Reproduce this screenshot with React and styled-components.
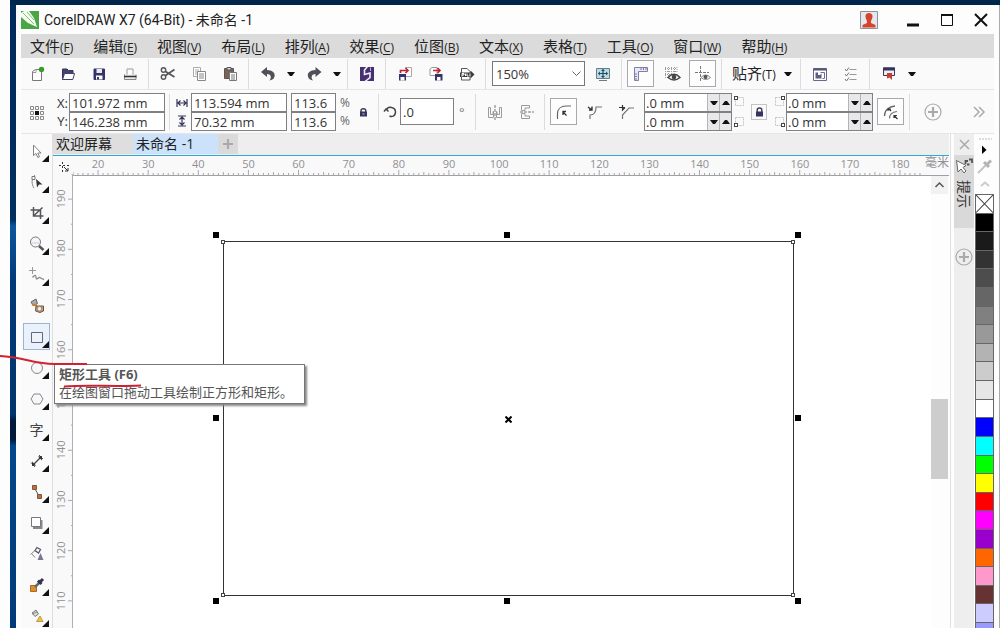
import React from 'react';
import styled, { createGlobalStyle, css } from 'styled-components';

const GlobalStyle = createGlobalStyle`
  *, *::before, *::after { box-sizing: border-box; }
  body { margin: 0; background: #fff; }
  body, button, input, select {
    font-family: "Open Sans", "Noto Sans CJK SC", sans-serif;
    font-size: 13px;
    color: #333;
  }
  button { padding: 0; border: 0; background: none; }
`;

const Desktop = styled.div`
  position: relative;
  height: 100vh;
  padding-left: 10px;
  overflow: hidden;
  background: #fdfdfd;
`;

const Wallpaper = styled.div`
  height: 100%;
  padding: 5px 1px 0 6px;
  background:
    linear-gradient(#00254a, #00254a) 0 0 / 100% 5px no-repeat,
    linear-gradient(#012a5c 0%, #01305f 35%, #0a57a0 36%, #023a78 45%, #01366e 66%, #001a3a 67%, #001a3a 70%, #02488c 71%, #023a78 100%) 0 0 / 6px 100% no-repeat,
    #aaa;
`;

const Window = styled.div`
  display: flex;
  flex-direction: column;
  height: 100%;
  padding: 0 5px;
  background: #fdfdfe;
`;

const TitleBar = styled.header`
  display: flex;
  align-items: center;
  flex: none;
  height: 29px;
  margin-right: -4px;
`;

const Title = styled.h1`
  flex: 1;
  margin: 0 0 0 5px;
  font-family: Roboto, "Noto Sans CJK SC", sans-serif;
  font-size: 14px;
  line-height: 20px;
  font-weight: 400;
  color: #222;
  white-space: nowrap;
`;

const WindowButton = styled.button`
  display: flex;
  justify-content: center;
  width: 34px;
`;

const UserButton = styled(WindowButton)`
  margin-right: 10px;
`;

const MenuBar = styled.nav`
  display: flex;
  gap: 20px;
  flex: none;
  height: 24px;
  padding-left: 9px;
  background: #dbdbdb;
`;

const MenuItem = styled.button`
  flex: none;
  font-size: 15px;
  line-height: 24px;
  color: #222;
  white-space: nowrap;
`;

const Mnemonic = styled.span`
  font-size: 12px;
  u { text-underline-offset: 2px; }
`;

const Bar = styled.div`
  display: flex;
  align-items: center;
  flex: none;
  height: ${(p) => p.$height}px;
  border-bottom: 1px solid #e6e6e8;
  background: #fafafb;
`;

const ToolButton = styled.button`
  display: flex;
  align-items: center;
  justify-content: center;
  flex: none;
  width: 31px;
  height: 27px;
  ${(p) => p.$boxed && css`
    width: 27px;
    margin: 0 2px;
    border: 1px solid #a9a9ad;
    background: #fdfdfe;
  `}
`;

const RatioButton = styled(ToolButton)`
  width: 23px;
`;

const CustomizeButton = styled(ToolButton)`
  margin-left: 4px;
`;

const CaretButton = styled.button`
  display: flex;
  align-items: center;
  justify-content: center;
  flex: none;
  width: 15px;
  height: 26px;
`;

const Separator = styled.span`
  flex: none;
  width: 1px;
  height: ${(p) => p.$height || 30}px;
  margin: 0 3px;
  background: #dcdce0;
`;

const SnapButton = styled.button`
  display: flex;
  align-items: center;
  gap: 8px;
  width: 72px;
  padding-left: 7px;
  font-size: 15px;
  line-height: 24px;
  color: #222;
  white-space: nowrap;
`;

const ZoomBox = styled.label`
  position: relative;
  display: flex;
  align-items: center;
  flex: none;
  width: 93px;
  margin: 0 2px 0 3px;
  svg { position: absolute; right: 3px; pointer-events: none; }
`;

const ZoomSelect = styled.select`
  appearance: none;
  width: 100%;
  height: 25px;
  padding: 0 3px;
  border: 1px solid #777;
  border-radius: 0;
  background: #fff;
  line-height: 20px;
`;

const FieldGroup = styled.div`
  display: grid;
  grid-template-columns: ${(p) => p.$columns};
  grid-template-rows: 19px 18px;
  flex: none;
  align-items: center;
  margin: 0 ${(p) => p.$right || 0}px 0 ${(p) => p.$left || 0}px;
`;

const FieldLabel = styled.label`
  display: flex;
  justify-content: center;
  line-height: 18px;
  white-space: nowrap;
`;

const Field = styled.input`
  width: 100%;
  height: ${(p) => p.$height || 19}px;
  align-self: start;
  padding: 0 2px;
  border: 1px solid #808084;
  border-radius: 0;
  background: #fff;
  line-height: 16px;
  color: #333;
`;

const SpinField = styled.div`
  display: flex;
  align-self: start;
  height: 19px;
  border: 1px solid #808084;
  background: #fff;
`;

const SpinInput = styled.input`
  flex: 1;
  min-width: 0;
  padding: 0 0 0 1px;
  border: 0;
  background: none;
  color: #333;
`;

const SpinButton = styled.button`
  display: flex;
  align-items: center;
  justify-content: center;
  width: 12px;
  border-left: 1px solid #b4b4b8;
  background: #e8e8ea;
`;

const AngleField = styled(Field)`
  width: 54px;
  flex: none;
  align-self: center;
`;

const Degree = styled.span`
  width: 18px;
  padding-left: 5px;
  line-height: 18px;
  color: #777;
`;

const Percent = styled.span`
  padding-left: 4px;
  line-height: 18px;
  font-size: 12px;
  color: #666;
`;

const CornerPair = styled.div`
  display: flex;
  flex-direction: column;
  align-items: center;
  gap: 7px;
  flex: none;
  width: 14px;
`;

const LockButton = styled.button`
  display: flex;
  align-items: center;
  justify-content: center;
  flex: none;
  width: 16px;
  height: 16px;
  margin: 0 5px;
  border: 1px solid #c4c4c8;
`;

const Spacer = styled.span`
  flex: 1;
`;

const Body = styled.div`
  display: flex;
  flex: 1;
  min-height: 0;
`;

const Toolbox = styled.aside`
  flex: none;
  width: 32px;
  padding-top: 1px;
  border-right: 1px solid #dedee2;
  background: #fafafb;
`;

const ToolSlot = styled.div`
  position: relative;
  display: flex;
  align-items: center;
  justify-content: center;
  height: 31px;
`;

const Tool = styled.button`
  display: flex;
  align-items: center;
  justify-content: center;
  width: 27px;
  height: 27px;
  border: 1px solid ${(p) => (p.$active ? '#9fb4d0' : 'transparent')};
  background: ${(p) => (p.$active ? '#e9f1fc' : 'none')};
`;

const Glyph = styled.span`
  font-size: 14px;
  line-height: 24px;
  color: #444;
`;

const Flyout = styled.span`
  position: absolute;
  right: 3px;
  bottom: 4px;
  width: 7px;
  height: 7px;
  background: #111;
  clip-path: polygon(100% 0, 100% 100%, 0 100%);
`;

const Tooltip = styled.div`
  position: absolute;
  z-index: 3;
  top: 43px;
  left: 33px;
  width: 251px;
  height: 40px;
  padding: 0 4px;
  border: 1px solid #777;
  background: #fff;
  box-shadow: 2px 2px 2px #888;
  font-size: 13px;
  line-height: 18px;
  color: #555;
  white-space: nowrap;
  strong { display: block; font-weight: 700; color: #555; }
`;

const Document = styled.main`
  display: flex;
  flex-direction: column;
  flex: 1;
  min-width: 0;
`;

const Tabs = styled.div`
  display: flex;
  flex: none;
  height: 22px;
  border-bottom: 1px solid #2fa8d8;
  background: #eeeeee;
`;

const Tab = styled.button`
  width: ${(p) => p.$width}px;
  height: 20px;
  padding: 0 0 0 3px;
  text-align: left;
  font-size: 14px;
  line-height: 20px;
  color: #222;
  white-space: nowrap;
  background: ${(p) => (p.$active ? '#cce2fb' : '#dedede')};
`;

const AddTab = styled.button`
  display: flex;
  align-items: center;
  justify-content: center;
  width: 20px;
  height: 20px;
  background: #dadada;
`;

const Workspace = styled.div`
  display: flex;
  flex: 1;
  min-height: 0;
`;

const RulerColumn = styled.div`
  display: flex;
  flex-direction: column;
  flex: none;
  width: 20px;
  background: #f9f9fa;
`;

const RulerOrigin = styled.button`
  display: flex;
  align-items: center;
  justify-content: center;
  flex: none;
  height: 18px;
  padding: 4px 0 0 2px;
`;

const VerticalRuler = styled.div`
  display: flex;
  flex: 1;
  min-height: 0;
  padding-bottom: 2px;
  border-right: 1px solid #b0b0b4;
`;

const VerticalLabels = styled.div`
  display: flex;
  flex-direction: column;
  flex: 1;
`;

const VerticalLabel = styled.span`
  display: flex;
  flex: 1;
  align-items: center;
  justify-content: center;
  writing-mode: vertical-rl;
  transform: rotate(180deg);
  width: 14px;
  margin-left: 1px;
  font-size: 11px;
  line-height: 14px;
  color: #909094;
`;

const PageColumn = styled.div`
  display: flex;
  flex-direction: column;
  flex: 1;
  min-width: 0;
`;

const HorizontalRuler = styled.div`
  display: flex;
  flex: none;
  height: 20px;
  border-bottom: 1px solid #a0a0a4;
  background: #f9f9fa;
`;

const HorizontalScale = styled.div`
  display: flex;
  flex-direction: column;
  flex: 1;
`;

const HorizontalLabels = styled.div`
  display: flex;
  height: 14px;
`;

const HorizontalLabel = styled.span`
  flex: 1;
  text-align: center;
  font-size: 11px;
  line-height: 15px;
  color: #909094;
`;

const Unit = styled.span`
  width: 24px;
  font-size: 12px;
  line-height: 14px;
  color: #909094;
  white-space: nowrap;
`;

const CanvasRow = styled.div`
  display: flex;
  flex: 1;
  min-height: 0;
`;

const Canvas = styled.section`
  position: relative;
  flex: 1;
  overflow: hidden;
  background: #fff;
`;

const Shape = styled.div`
  position: absolute;
  left: 150px;
  top: 65px;
  width: 571px;
  height: 355px;
  border: 1px solid #333;
`;

const Handle = styled.span`
  position: absolute;
  left: ${(p) => p.$x}px;
  top: ${(p) => p.$y}px;
  width: 6px;
  height: 6px;
  background: #000;
`;

const Node = styled.span`
  position: absolute;
  left: ${(p) => p.$x}px;
  top: ${(p) => p.$y}px;
  width: 4px;
  height: 4px;
  border: 1px solid #444;
  background: #fff;
`;

const CenterMark = styled.svg`
  position: absolute;
  left: 432px;
  top: 240px;
`;

const ScrollTrack = styled.div`
  display: flex;
  flex-direction: column;
  flex: none;
  width: 18px;
  background: #fdfdfd;
`;

const ScrollArrow = styled.button`
  display: flex;
  align-items: center;
  justify-content: center;
  width: 17px;
  height: 18px;
  background: #f2f2f2;
`;

const ScrollThumb = styled.div`
  width: 17px;
  height: 80px;
  margin-top: 205px;
  background: #cdcdcd;
`;

const Docker = styled.aside`
  display: flex;
  flex-direction: column;
  align-items: center;
  flex: none;
  width: 20px;
  margin: 0 1px 0 5px;
  background: #eeeeee;
  box-shadow: -3px 0 0 #fdfdfe, -4px 0 0 #e0e0e4;
`;

const DockerClose = styled.button`
  display: flex;
  align-items: center;
  justify-content: center;
  width: 20px;
  height: 21px;
`;

const DockerTab = styled.button`
  display: flex;
  flex-direction: column;
  align-items: center;
  gap: 5px;
  width: 20px;
  height: 73px;
  padding-top: 2px;
  background: #d9d9d9;
  span {
    writing-mode: vertical-rl;
    text-orientation: sideways;
    line-height: 20px;
    font-size: 14px;
    color: #333;
  }
`;

const DockerAdd = styled.button`
  margin-top: 20px;
  height: 18px;
`;

const Palette = styled.aside`
  display: flex;
  flex-direction: column;
  flex: none;
  width: 19px;
`;

const PaletteTools = styled.div`
  display: flex;
  flex-direction: column;
  align-items: center;
  flex: none;
  height: 60px;
`;

const Swatch = styled.button`
  flex: 1;
  min-height: 0;
  border: 1px solid #666;
  border-bottom: 0;
  background: ${(p) => p.$color};
  ${(p) => p.$partial && css`flex: none; height: 6px;`}
  svg { display: block; width: 100%; height: 100%; }
`;

const Annotation = styled.svg`
  position: absolute;
  z-index: 5;
  top: 350px;
  left: 0;
  pointer-events: none;
`;

const Icon = ({ size = 18, children }) => (
  <svg width={size} height={size} viewBox={`0 0 ${size} ${size}`} fill="none" stroke="#55555c" strokeWidth="1" aria-hidden="true">
    {children}
  </svg>
);

const Caret = ({ up = false }) => (
  <svg width="8" height="4" viewBox="0 0 8 4" aria-hidden="true">
    <path d={up ? 'M0 4L3 0H5L8 4Z' : 'M0 0H8L5 4H3Z'} fill="#111" />
  </svg>
);

const Plus = ({ circled = false }) => (
  <svg width="20" height="18" viewBox="0 0 20 18" fill="none" stroke="#aaa" aria-hidden="true">
    {circled && <circle cx="10" cy="9" r="8" strokeWidth="1.2" />}
    <path d="M10 4V14M5 9H15" strokeWidth="2.2" />
  </svg>
);

const Padlock = ({ open = false }) => (
  <svg width="9" height="10" viewBox="0 0 9 10" aria-hidden="true">
    <path d={open ? 'M2 5V3.6C2 1.2 6.8 1.2 6.8 3.6V5' : 'M2.2 5V3C2.2.4 6.8.4 6.8 3V5'} fill="none" stroke="#3c3c50" strokeWidth="1.4" />
    <rect x="1" y="4.5" width="7" height="5" fill="#34345e" />
    {open && <path d="M3.5 7H5.5" stroke="#c8c8e0" />}
  </svg>
);

const icons = {
  create: <><path d="M4.5 15.5V6.5L7.5 4.5H13.5V15.5Z" fill="#fff" stroke="#777" /><path d="M4.5 7.5H8V4.5" stroke="#999" /><circle cx="13.5" cy="4.5" r="2.7" fill="#389b2c" stroke="none" /></>,
  open: <><path d="M3.5 14.5V4H8L9.5 5.5H14V8" fill="#44446e" stroke="#33335a" /><path d="M3.5 14.5L5.5 8.5H15.5L13.8 14.5Z" fill="#fff" stroke="#404066" /></>,
  save: <><path d="M4 4H14.5V14.5H4Z" fill="#34346a" stroke="#34346a" /><path d="M6.5 4H12V8H6.5Z" fill="#e8e8f4" stroke="none" /><path d="M6 10.5H12.5V14.5H6Z" fill="#fff" stroke="none" /><path d="M7 12H9V14.5H7Z" fill="#34346a" stroke="none" /></>,
  print: <><path d="M6 10V4H12V10" fill="#fff" stroke="#999" /><path d="M3.5 9.5V14.5H15V9.5" fill="#e9e9e4" stroke="#888" /><path d="M3 11.5H15.5" stroke="#333" strokeWidth="1.5" /></>,
  cut: <><circle cx="4.5" cy="5" r="2.2" strokeWidth="1.4" /><circle cx="4.5" cy="12" r="2.2" strokeWidth="1.4" /><path d="M6.5 6.5L15.5 12M6.5 10.5L15.5 4.5" strokeWidth="1.8" /></>,
  copy: <><path d="M3.5 2.5H10.5V11.5H3.5Z" fill="#fff" stroke="#aaa" /><path d="M5 5H9M5 7H9M5 9H8" stroke="#aaa" /><path d="M7.5 6.5H15.5V15.5H7.5Z" fill="#fff" stroke="#888" /><path d="M9 9H14M9 11H14M9 13H14" stroke="#888" /></>,
  paste: <><path d="M3.5 3.5H12.5V13.5H3.5Z" fill="#77655c" stroke="#64544c" /><path d="M6 2.5H10V5H6Z" fill="#ddd" /><path d="M8.5 7.5H15.5V15.5H8.5Z" fill="#fff" stroke="#777" /><path d="M10 10H14M10 12H14M10 14H14" stroke="#777" /></>,
  undo: <path d="M2 7L8 2V5C13.5 5 16.5 8 15.5 11.5C15 14 13 15.2 10.5 15.5C13 12.5 12 9 8 9V12Z" fill="#505058" stroke="none" />,
  redo: <path d="M16.5 7L10.5 2V5C5 5 2 8 3 11.5C3.5 14 5.5 15.2 8 15.5C5.5 12.5 6.5 9 10.5 9V12Z" fill="#505058" stroke="none" />,
  search: <><path d="M2 2H16V16H2Z" fill="#472f70" stroke="none" /><path d="M9.5 1.5L6.5 5V9.5L12 8V12.5L7 16.5" stroke="#f2edf8" strokeWidth="1.6" /><path d="M12.5 2.5V6" stroke="#bfb2d4" /></>,
  importFile: <><path d="M9 2.5H15.5V11.5H9" stroke="#aaa" fill="#fff" /><path d="M3 9H10V15.5H3Z" fill="#34346a" stroke="none" /><path d="M4.5 12H8.5V15.5H4.5Z" fill="#fff" stroke="none" /><path d="M4.5 8V5.5H12M9.5 3L12 5.5L9.5 8" stroke="#bd2730" strokeWidth="1.7" /></>,
  exportFile: <><path d="M3 10.5V4L5 2.5H10V10.5Z" fill="#fff" stroke="#999" /><path d="M8 9H15.5V15.5H8Z" fill="#34346a" stroke="none" /><path d="M10 12H13.5V15.5H10Z" fill="#fff" stroke="none" /><path d="M6 5.5H13M10.5 3L13 5.5L10.5 8" stroke="#bd2730" strokeWidth="1.7" /></>,
  publish: <><path d="M3.5 15V3.5H9L12 6.5V15Z" fill="#fff" stroke="#555" /><path d="M2 7.5H12.5V5.5L16.5 9.5L12.5 13.5V12H2Z" fill="#3c3c40" stroke="none" /><path d="M4 11.5V8.5H6V10H4M7.5 8.5V11M9 8.5V11H10.5M12 8.5V11.5" stroke="#fff" /></>,
  fullScreen: <><path d="M2.5 3.5H15.5V13.5H2.5Z" fill="#b9dbe5" stroke="#6a7c88" /><path d="M9 4.5V12.5M4.5 8.5H13.5" stroke="#234c63" strokeWidth="1.2" /><path d="M9 4L7 6H11ZM9 13L7 11H11ZM4 8.5L6 6.5V10.5ZM14 8.5L12 6.5V10.5Z" fill="#234c63" stroke="none" /><path d="M5 15.5H13" stroke="#777" /></>,
  rulers: <><path d="M2.5 2.5H15.5V6.5H6.5V15.5H2.5Z" fill="#e8e8fa" stroke="#8080a4" /><path d="M9 3V5M11.5 3V5M14 3V5M3 9H5M3 11.5H5M3 14H5" stroke="#7878a0" /></>,
  grid: <><path d="M2 3.5H14M2 6.5H14M2 9.5H9M2 12.5H6M2.5 2V14M5.5 2V14M8.5 2V9M11.5 2V8M14 2V7" stroke="#9a9a9e" strokeDasharray="1 1" /><path d="M5 12.5Q11 6 17 12.5Q11 17.5 5 12.5Z" fill="#fff" stroke="#444" strokeWidth="1.4" /><circle cx="11" cy="12" r="2.3" fill="#444" stroke="none" /></>,
  guides: <><path d="M6.5 1V16M1 7.5H15" stroke="#777" strokeDasharray="3 1" /><path d="M7 12.5Q11.5 7.5 16.5 12.5Q11.5 16.5 7 12.5Z" fill="#fff" stroke="#888" /><circle cx="11.5" cy="12" r="2" fill="#555" stroke="none" /></>,
  options: <><path d="M2.5 3.5H15.5V15.5H2.5Z" fill="#fff" stroke="#68688a" /><path d="M2.5 4.5H15.5" stroke="#55557a" strokeWidth="2" /><path d="M4.5 7.5H7V10H9L10.5 8.5V13.5H4.5Z" fill="#5c5c84" stroke="none" /><path d="M9.5 7.5H13.5V13.5H11.5" stroke="#6c6c90" /></>,
  launcher: <><path d="M7.5 4.5H14.5M7.5 9.5H14.5M7.5 14.5H14.5" stroke="#999" strokeWidth="1.2" /><path d="M3 4L4.5 6L7 2.5M3 9L4.5 11L7 7.5M3 14L4.5 16L7 12.5" stroke="#777" /></>,
  welcome: <><path d="M3.5 3H14.5V10.5H3.5Z" fill="#eee" stroke="#33335c" /><path d="M3 4H15" stroke="#33335c" strokeWidth="3" /><path d="M7 8H12V15L9.5 12.5L7 13.5Z" fill="#c43f32" stroke="none" /></>,
  origin: <><path d="M2.5 3.5H5.5V6.5H2.5ZM7.5 3.5H10.5V6.5H7.5ZM12.5 3.5H15.5V6.5H12.5ZM2.5 8.5H5.5V11.5H2.5ZM12.5 8.5H15.5V11.5H12.5ZM2.5 13.5H5.5V16.5H2.5ZM7.5 13.5H10.5V16.5H7.5ZM12.5 13.5H15.5V16.5H12.5Z" stroke="#888" /><path d="M7 8H11V12H7Z" fill="#111" stroke="none" /></>,
  mirrorH: <><path d="M2.5 4.5H4.5V11.5H7V8.5H7.5V14.5H2.5ZM15.5 4.5H13.5V11.5H11V8.5H10.5V14.5H15.5Z" stroke="#9a9aa0" /><path d="M9 2V17" stroke="#777" strokeDasharray="3 1" /></>,
  mirrorV: <><path d="M4.5 2.5H12.5V5H8V7.5H4.5ZM4.5 15.5H12.5V13H8V10.5H4.5Z" stroke="#9a9aa0" /><path d="M3 9H17" stroke="#777" strokeDasharray="3 1" /></>,
  roundCorner: <><path d="M2.5 16V11C2.5 6 6 3 11 3H16" stroke="#666" strokeWidth="1.2" /><path d="M11.5 12.5L8 9M8 12V8.5H11" stroke="#333" strokeWidth="1.3" /></>,
  scallopCorner: <><path d="M4 16V12C8 12 10 9 10 4H16" stroke="#777" strokeWidth="1.2" /><path d="M2 4L6 7M6 3.5V7H3" stroke="#333" strokeWidth="1.4" /></>,
  chamferCorner: <><path d="M5.5 16V12L12 5H17" stroke="#777" strokeWidth="1.2" /><path d="M2 4.5H8M5.5 2V7L8 4.5" stroke="#333" strokeWidth="1.2" /></>,
  relativeCorner: <><path d="M2.5 13C2.5 7 7 3.5 13 3" stroke="#666" strokeWidth="1.3" /><path d="M7.5 15.5C7.5 11 10 9 15 8.5" stroke="#777" strokeWidth="1.2" /><path d="M9 8L6.5 5.5M6 8V6H9M15.5 16L12 12.5M12 15V12.5H15" stroke="#333" strokeWidth="1.2" /></>,
  rotate: <path d="M6.5 8.5L4 6L2 8.5M4.5 7C6 2.5 13.5 4 13.5 9C13.5 13.5 9.5 14 7.5 13" stroke="#444" strokeWidth="1.5" />,
  pick: <path d="M5.5 3V13.5L8 11.5L9.8 15.5L11.5 14.7L9.8 11H13Z" fill="#fff" stroke="#808086" />,
  shape: <><path d="M7 2C3 6 3.5 11 6 15" stroke="#888" /><path d="M4 3.5H7V6.5H4Z" fill="#fff" stroke="#777" /><path d="M8 6L14.5 11.5H11L9 14.5Z" fill="#333" stroke="none" /></>,
  crop: <path d="M5.5 3V12H15.5M2.5 6H12.5V15M14.5 3.5L6 11.5" stroke="#55555a" strokeWidth="1.5" />,
  zoom: <><circle cx="7.5" cy="7" r="5" fill="#f3f6fa" stroke="#777" /><path d="M4 8H11" stroke="#ccc" /><path d="M11 11L15.5 15" stroke="#555" strokeWidth="2.4" /></>,
  freehand: <><path d="M4.5 1V8M1 4.5H8" stroke="#999" /><path d="M4.5 11.5C7 8.5 8 9 8 11.5C8 14 10 12.5 11 11.5S13 13 16 13.5" stroke="#888" strokeWidth="1.3" /></>,
  smartFill: <><path d="M3 5L8 2L9.5 6.5L5 8.5Z" fill="#aaa" stroke="#666" /><path d="M4 7.5L9 8.5" stroke="#c78136" strokeWidth="2" /><path d="M8 9H15.5V14L12 15.5L7.5 14Z" fill="#d99a54" stroke="#71543c" /><circle cx="11.5" cy="11.8" r="2.3" fill="#eee" stroke="#888" /></>,
  rectangle: <path d="M3.5 4.5H14.5V14.5H3.5Z" fill="#eef2fa" stroke="#66667c" />,
  ellipse: <circle cx="9" cy="9" r="5.5" fill="#f7f7fa" stroke="#88888f" />,
  polygon: <path d="M6 4H12L15 9L12 14H6L3 9Z" fill="#f7f7fa" stroke="#88888f" />,
  dimension: <><path d="M5 13L13 5" stroke="#444" strokeWidth="1.2" /><path d="M3 10.5L7 15M11 3L15 7" stroke="#555" /><path d="M4 14V9.5L8 13.5ZM14 4V8.5L10 4.5Z" fill="#333" stroke="none" /></>,
  connector: <><path d="M6.5 5L11 13" stroke="#555" /><path d="M4.5 2.5H8.5V6.5H4.5ZM9.5 11.5H13.5V15.5H9.5Z" fill="#bf7040" stroke="#80563e" /></>,
  shadow: <><path d="M5 6H14.5V15H5Z" fill="#88888f" stroke="none" /><path d="M3.5 3.5H12.5V12.5H3.5Z" fill="#fff" stroke="#77777d" /></>,
  transparency: <><path d="M7 5.5L9 2.5L12.5 4.5L10.5 8Z" fill="#fff" stroke="#555570" strokeWidth="1.3" /><path d="M2.5 9.5L7 5.5M4 9L7 12.5" stroke="#888" /><path d="M12.5 8L15.5 15H9.5Z" fill="#777790" stroke="none" /></>,
  dropper: <><path d="M2.5 9.5H8.5V15.5H2.5Z" fill="#df8d28" stroke="#a66a20" /><path d="M7 11L12 6" stroke="#666" strokeWidth="2.5" /><path d="M10 4.5L13.5 8M11.5 6.5L15 3" stroke="#33334e" strokeWidth="3" /></>,
  fill: <><path d="M4 6L8 3L10.5 7L7 9.5Z" fill="#ddd" stroke="#777" /><path d="M4 7L9 5" stroke="#888" /><path d="M12 9L15 14.5H8.5Z" fill="#ebc449" stroke="#c49b3a" /></>,
};

const menus = [
  ['文件', 'F'], ['编辑', 'E'], ['视图', 'V'], ['布局', 'L'], ['排列', 'A'], ['效果', 'C'],
  ['位图', 'B'], ['文本', 'X'], ['表格', 'T'], ['工具', 'O'], ['窗口', 'W'], ['帮助', 'H'],
];

const tools = [
  ['pick', '选择工具', true], ['shape', '形状工具', true], ['crop', '裁剪工具', true], ['zoom', '缩放工具', true],
  ['freehand', '手绘工具', true], ['smartFill', '智能填充', false], ['rectangle', '矩形工具', true], ['ellipse', '椭圆形工具', true],
  ['polygon', '多边形工具', true], ['text', '文本工具', true], ['dimension', '度量工具', true], ['connector', '连接器工具', true],
  ['shadow', '阴影工具', true], ['transparency', '透明度工具', false], ['dropper', '颜色滴管', true], ['fill', '交互式填充', true],
];

const colors = [
  '#000000', '#1a1a1a', '#333333', '#4d4d4d', '#666666', '#808080', '#999999', '#b3b3b3', '#cccccc', '#e6e6e6', '#ffffff',
  '#0000ff', '#00ffff', '#00ff00', '#ffff00', '#ff0000', '#ff00ff', '#9900cc', '#ff6600', '#ff99cc', '#663333', '#ccccff', '#9999ff',
];

const horizontalMarks = Array.from({ length: 17 }, (_, i) => 20 + i * 10);
const verticalMarks = Array.from({ length: 9 }, (_, i) => 190 - i * 10);

const IconButton = ({ name, label, boxed }) => (
  <ToolButton $boxed={boxed} aria-label={label}><Icon>{icons[name]}</Icon></ToolButton>
);

const tickLength = (i) => (i % 10 === 5 ? 6 : i % 10 === 0 ? 3 : 2);

const Ticks = ({ cells, vertical }) => {
  const count = cells * 10;
  return (
    <svg width={vertical ? 6 : '100%'} height={vertical ? '100%' : 5} aria-hidden="true">
      {Array.from({ length: count }, (_, i) => {
        const at = `${(i / count) * 100}%`;
        const length = tickLength(i);
        return vertical
          ? <line key={i} x1={6 - length} x2="6" y1={at} y2={at} stroke="#a8a8ac" />
          : <line key={i} y1={5 - length} y2="5" x1={at} x2={at} stroke="#a8a8ac" />;
      })}
    </svg>
  );
};

const Spin = ({ label }) => (
  <SpinField>
    <SpinInput aria-label={label} defaultValue=".0 mm" />
    <SpinButton aria-label={`${label} 减`}><Caret /></SpinButton>
    <SpinButton aria-label={`${label} 加`}><Caret up /></SpinButton>
  </SpinField>
);

const CornerMark = ({ right, bottom }) => (
  <svg width="13" height="13" viewBox="0 0 13 13" fill="none" aria-hidden="true">
    <path d="M2.5 2.5H10.5V10.5H2.5Z" stroke="#c4c4c4" strokeDasharray="2 1" />
    <rect x={right ? 8.5 : 1.5} y={bottom ? 8.5 : 1.5} width="3" height="3" fill="#fff" stroke="#444" />
  </svg>
);

const StandardBar = () => (
  <Bar $height={32}>
    <IconButton name="create" label="新建" />
    <IconButton name="open" label="打开" />
    <IconButton name="save" label="保存" />
    <IconButton name="print" label="打印" />
    <Separator />
    <IconButton name="cut" label="剪切" />
    <IconButton name="copy" label="复制" />
    <IconButton name="paste" label="粘贴" />
    <Separator />
    <IconButton name="undo" label="撤消" />
    <CaretButton aria-label="撤消列表"><Caret /></CaretButton>
    <IconButton name="redo" label="重做" />
    <CaretButton aria-label="重做列表"><Caret /></CaretButton>
    <Separator />
    <IconButton name="search" label="搜索内容" />
    <Separator />
    <IconButton name="importFile" label="导入" />
    <IconButton name="exportFile" label="导出" />
    <IconButton name="publish" label="发布为 PDF" />
    <Separator />
    <ZoomBox>
      <ZoomSelect aria-label="缩放级别" defaultValue="150%"><option>150%</option></ZoomSelect>
      <svg width="11" height="8" viewBox="0 0 11 8" fill="none" stroke="#666" aria-hidden="true"><path d="M1.5 1.5L5.5 5.5L9.5 1.5" /></svg>
    </ZoomBox>
    <IconButton name="fullScreen" label="全屏预览" />
    <Separator />
    <IconButton name="rulers" label="显示标尺" boxed />
    <IconButton name="grid" label="显示网格" />
    <IconButton name="guides" label="显示辅助线" boxed />
    <Separator />
    <SnapButton><span>贴齐<Mnemonic>(T)</Mnemonic></span><Caret /></SnapButton>
    <Separator />
    <IconButton name="options" label="选项" />
    <IconButton name="launcher" label="应用程序启动器" />
    <Separator />
    <IconButton name="welcome" label="欢迎屏幕" />
    <CaretButton aria-label="更多"><Caret /></CaretButton>
  </Bar>
);

const PropertyBar = () => (
  <Bar $height={44}>
    <IconButton name="origin" label="对象原点" />
    <FieldGroup $columns="13px 96px" $left={4} $right={1}>
      <FieldLabel htmlFor="pos-x">X:</FieldLabel><Field id="pos-x" defaultValue="101.972 mm" />
      <FieldLabel htmlFor="pos-y">Y:</FieldLabel><Field id="pos-y" defaultValue="146.238 mm" />
    </FieldGroup>
    <Separator $height={36} />
    <FieldGroup $columns="18px 96px" $right={4}>
      <FieldLabel htmlFor="width" aria-label="宽度">
        <svg width="12" height="10" fill="none" stroke="#33335a" strokeWidth="1.2"><path d="M1 1V9M11 1V9M2 5H10M4.5 2.5L2 5L4.5 7.5M7.5 2.5L10 5L7.5 7.5" /></svg>
      </FieldLabel>
      <Field id="width" defaultValue="113.594 mm" />
      <FieldLabel htmlFor="height" aria-label="高度">
        <svg width="10" height="12" fill="none" stroke="#33335a" strokeWidth="1.2"><path d="M1 1H9M1 11H9M5 2V10M2.5 4.5L5 2L7.5 4.5M2.5 7.5L5 10L7.5 7.5" /></svg>
      </FieldLabel>
      <Field id="height" defaultValue="70.32 mm" />
    </FieldGroup>
    <FieldGroup $columns="45px 16px">
      <Field aria-label="水平缩放" defaultValue="113.6" /><Percent>%</Percent>
      <Field aria-label="垂直缩放" defaultValue="113.6" /><Percent>%</Percent>
    </FieldGroup>
    <RatioButton aria-label="锁定比率"><Padlock open /></RatioButton>
    <Separator $height={36} />
    <FieldLabel htmlFor="angle" aria-label="旋转角度"><Icon>{icons.rotate}</Icon></FieldLabel>
    <AngleField id="angle" $height={27} defaultValue=".0" />
    <Degree>°</Degree>
    <Separator $height={36} />
    <IconButton name="mirrorH" label="水平镜像" />
    <IconButton name="mirrorV" label="垂直镜像" />
    <Separator $height={36} />
    <IconButton name="roundCorner" label="圆角" boxed />
    <IconButton name="scallopCorner" label="扇形角" />
    <IconButton name="chamferCorner" label="倒棱角" />
    <FieldGroup $columns="88px" $left={3}><Spin label="左上角" /><Spin label="左下角" /></FieldGroup>
    <CornerPair><CornerMark /><CornerMark bottom /></CornerPair>
    <LockButton aria-label="同时编辑所有角"><Padlock /></LockButton>
    <CornerPair><CornerMark right /><CornerMark right bottom /></CornerPair>
    <FieldGroup $columns="87px" $right={2}><Spin label="右上角" /><Spin label="右下角" /></FieldGroup>
    <IconButton name="relativeCorner" label="相对角缩放" boxed />
    <Separator $height={36} />
    <CustomizeButton aria-label="快速自定义"><Plus circled /></CustomizeButton>
    <Spacer />
    <ToolButton aria-label="更多选项">
      <svg width="14" height="12" fill="none" stroke="#aaa" strokeWidth="1.5"><path d="M2 1L7 6L2 11M7 1L12 6L7 11" /></svg>
    </ToolButton>
  </Bar>
);

export default function App() {
  return (
    <Desktop>
      <GlobalStyle />
      <Wallpaper>
        <Window>
          <TitleBar>
            <svg width="18" height="18" viewBox="0 0 18 18" aria-hidden="true">
              <path d="M0 0H18V18H0Z" fill="#4aa545" />
              <path d="M0 2L3 0H8L13 7L16 16L7 12L0 6Z" fill="#f7fbf4" />
              <path d="M2 2L13 13M6 1L13 9" stroke="#82bf72" />
            </svg>
            <Title>CorelDRAW X7 (64-Bit) - 未命名 -1</Title>
            <UserButton aria-label="用户">
              <svg width="18" height="18" viewBox="0 0 18 18">
                <path d="M.5 .5H17.5V17.5H.5Z" fill="#e4e7ec" stroke="#8c929b" />
                <path d="M5.5 5C5.5 1 12.5 1 12.5 5C12.5 8 11.5 8.5 11 10V12L15.5 14V16.5H2.5V14L7 12V10C6.5 8.5 5.5 8 5.5 5Z" fill="#d6422b" />
              </svg>
            </UserButton>
            <WindowButton aria-label="最小化"><svg width="14" height="16"><path d="M1 13H13" stroke="#111" strokeWidth="3" /></svg></WindowButton>
            <WindowButton aria-label="最大化"><svg width="14" height="14" fill="none" stroke="#111"><path d="M1.5 1.5H12.5V12.5H1.5Z" /><path d="M1 2H13" strokeWidth="2" /></svg></WindowButton>
            <WindowButton aria-label="关闭"><svg width="14" height="14"><path d="M1 1L13 13M13 1L1 13" stroke="#111" strokeWidth="2" /></svg></WindowButton>
          </TitleBar>
          <MenuBar>
            {menus.map(([name, key]) => (
              <MenuItem key={key}>{name}<Mnemonic>(<u>{key}</u>)</Mnemonic></MenuItem>
            ))}
          </MenuBar>
          <StandardBar />
          <PropertyBar />
          <Body>
            <Toolbox>
              {tools.map(([name, label, flyout]) => (
                <ToolSlot key={name}>
                  <Tool $active={name === 'rectangle'} aria-label={label}>
                    {name === 'text' ? <Glyph>字</Glyph> : <Icon>{icons[name]}</Icon>}
                  </Tool>
                  {flyout && <Flyout />}
                  {name === 'rectangle' && (
                    <Tooltip role="tooltip"><strong>矩形工具 (F6)</strong>在绘图窗口拖动工具绘制正方形和矩形。</Tooltip>
                  )}
                </ToolSlot>
              ))}
            </Toolbox>
            <Document>
              <Tabs>
                <Tab $width={80}>欢迎屏幕</Tab>
                <Tab $width={85} $active>未命名 -1</Tab>
                <AddTab aria-label="新建文档"><Plus /></AddTab>
              </Tabs>
              <Workspace>
                <RulerColumn>
                  <RulerOrigin aria-label="标尺原点">
                    <svg width="12" height="12" fill="none" stroke="#333"><path d="M4.5 1V11M1 4.5H11" strokeDasharray="2 2" /><path d="M6 6L10 10M10 7V10H7" /></svg>
                  </RulerOrigin>
                  <VerticalRuler>
                    <VerticalLabels>{verticalMarks.map((m) => <VerticalLabel key={m}>{m}</VerticalLabel>)}</VerticalLabels>
                    <Ticks cells={9} vertical />
                  </VerticalRuler>
                </RulerColumn>
                <PageColumn>
                  <HorizontalRuler>
                    <HorizontalScale>
                      <HorizontalLabels>{horizontalMarks.map((m) => <HorizontalLabel key={m}>{m}</HorizontalLabel>)}</HorizontalLabels>
                      <Ticks cells={17} />
                    </HorizontalScale>
                    <Unit>毫米</Unit>
                  </HorizontalRuler>
                  <CanvasRow>
                    <Canvas>
                      <Shape />
                      {[140, 431, 722].map((x) => [56, 239, 422].map((y) => (
                        x === 431 && y === 239 ? null : <Handle key={`${x}-${y}`} $x={x} $y={y} />
                      )))}
                      {[148, 718].map((x) => [64, 417].map((y) => <Node key={`${x}-${y}`} $x={x} $y={y} />))}
                      <CenterMark width="7" height="7" stroke="#000" strokeWidth="2"><path d="M.5 .5L6.5 6.5M6.5 .5L.5 6.5" /></CenterMark>
                    </Canvas>
                    <ScrollTrack>
                      <ScrollArrow aria-label="向上滚动">
                        <svg width="11" height="8" fill="none" stroke="#555" strokeWidth="1.5"><path d="M1.5 6L5.5 2L9.5 6" /></svg>
                      </ScrollArrow>
                      <ScrollThumb />
                    </ScrollTrack>
                  </CanvasRow>
                </PageColumn>
              </Workspace>
            </Document>
            <Docker>
              <DockerClose aria-label="关闭泊坞窗"><svg width="11" height="11"><path d="M1 1L10 10M10 1L1 10" stroke="#aaa" strokeWidth="1.5" /></svg></DockerClose>
              <DockerTab>
                <svg width="20" height="18" viewBox="0 0 20 18" fill="none" stroke="#666" aria-hidden="true">
                  <path d="M2.5 3.5L4 15L7 12L10 16L12 14L9 10.5L12 8.5Z" fill="#fff" />
                  <path d="M11.5 7V4H14M13 7.5H15.5M15 2.5H18V6" stroke="#555" strokeWidth="1.8" />
                </svg>
                <span>提示</span>
              </DockerTab>
              <DockerAdd aria-label="添加泊坞窗"><Plus circled /></DockerAdd>
            </Docker>
            <Palette>
              <PaletteTools>
                <svg width="18" height="60" viewBox="0 0 18 60" aria-hidden="true">
                  <path d="M3 5H16" stroke="#bbb" strokeDasharray="2 1" />
                  <path d="M6 11.5V20L10.5 16Z" fill="#000" />
                  <path d="M2 39L10 31" stroke="#c4c4c4" strokeWidth="2" />
                  <path d="M8 28L13 33M10.5 31L15 26.5" stroke="#b4b4b4" strokeWidth="3" />
                  <path d="M5 52L9 48.5L13 52" fill="none" stroke="#ccc" strokeWidth="2" />
                </svg>
              </PaletteTools>
              <Swatch $color="#fff" aria-label="无填充">
                <svg viewBox="0 0 17 17" preserveAspectRatio="none"><path d="M0 0L17 17M17 0L0 17" stroke="#444" /></svg>
              </Swatch>
              {colors.map((c, i) => <Swatch key={c} $color={c} $partial={i === colors.length - 1} aria-label={c} />)}
            </Palette>
          </Body>
        </Window>
      </Wallpaper>
      <Annotation width="150" height="42" fill="none" stroke="#d32030" strokeWidth="2" aria-hidden="true">
        <path d="M0 6C22 7 35 14 54 14H87" />
        <path d="M64 36.5C90 34.5 110 37 141 35.5" />
      </Annotation>
    </Desktop>
  );
}
